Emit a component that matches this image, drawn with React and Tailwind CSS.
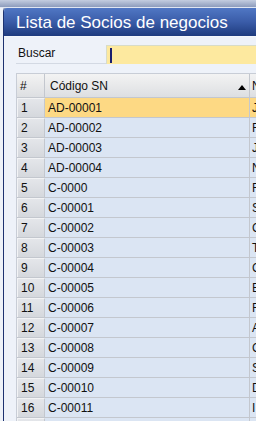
import React from "react";

const rows = [
  ["AD-00001", "J"],
  ["AD-00002", "F"],
  ["AD-00003", "J"],
  ["AD-00004", "N"],
  ["C-0000", "F"],
  ["C-00001", "S"],
  ["C-00002", "C"],
  ["C-00003", "T"],
  ["C-00004", "C"],
  ["C-00005", "E"],
  ["C-00006", "F"],
  ["C-00007", "A"],
  ["C-00008", "C"],
  ["C-00009", "S"],
  ["C-00010", "D"],
  ["C-00011", "I"],
  ["", ""],
];

const font = { fontFamily: '"Liberation Sans", Arial, sans-serif' };

const App = () => {
  return (
    <div
      className="w-[256px] h-[421px] overflow-hidden flex flex-col bg-[#b4c0d4]"
      style={font}
    >
      {/* Desktop strip above the window */}
      <div className="h-[8px] shrink-0 bg-gradient-to-b from-[#c3cde0] to-[#8d9cbc] border-b border-[#dfe6f2]" />

      <div className="flex flex-1 min-h-0">
        {/* Sliver of the window behind */}
        <div className="w-[3px] shrink-0 bg-[#eef2f8]" />

        {/* Window */}
        <div className="flex-1 min-w-0 flex flex-col border-l border-[#1d3270] rounded-tl-[4px] overflow-hidden bg-[#eef2f9]">
          {/* Title bar */}
          <div className="h-[29px] shrink-0 flex items-center pl-[12px] pt-[1px] bg-gradient-to-b from-[#5077c4] via-[#3a5ca8] to-[#1f3b7e] border-b border-[#f4f7fb]">
            <span className="text-white text-[17px] leading-none whitespace-nowrap">
              Lista de Socios de negocios
            </span>
          </div>

          {/* Search row */}
          <div className="flex items-end pl-[12px] pt-[8px] shrink-0">
            <div className="w-[90px] h-[19px] border-b border-[#d3d9e3] text-[12px] leading-[17px] pl-[2px] text-[#111]">
              Buscar
            </div>
            <div className="relative flex-1 h-[19px] bg-[#fde99f] border-l border-t border-[#d8dcc8]">
              <div className="absolute left-[3px] top-[2px] w-[2px] h-[15px] bg-[#1a1f6e]" />
            </div>
          </div>

          {/* Table */}
          <div className="mt-[9px] ml-[12px] flex-1 min-h-0 overflow-hidden border-l border-t border-[#c8cdd6]">
            <div className="w-[300px]">
              {/* Header */}
              <div className="flex h-[24px] bg-gradient-to-b from-[#f3f3f3] to-[#dddfe2] border-b border-[#c3c7ce] text-[12px] text-[#111]">
                <div className="w-[28px] shrink-0 border-r border-[#c3c7ce] flex items-center pl-[3px]">
                  #
                </div>
                <div className="w-[205px] shrink-0 border-r border-[#c3c7ce] flex items-center pl-[5px] relative">
                  Código SN
                  <svg
                    className="absolute right-[3px] top-[11px]"
                    width="8"
                    height="5"
                    viewBox="0 0 8 5"
                  >
                    <polygon points="0,5 8,5 4,0" fill="#000" />
                  </svg>
                </div>
                <div className="flex-1 flex items-center pl-[2px]">N</div>
              </div>

              {/* Rows */}
              {rows.map(([code, name], i) => {
                const sel = i === 0;
                return (
                  <div
                    key={i}
                    className="flex h-[20px] border-b border-[#c3c7ce] text-[12px] text-[#111]"
                  >
                    <div className="w-[28px] shrink-0 border-r border-[#c3c7ce] flex items-center pl-[3px] bg-gradient-to-b from-[#e4e6ea] to-[#d5d8dd] border-l border-t border-l-[#f2f3f5] border-t-[#f2f3f5]">
                      {code ? i + 1 : ""}
                    </div>
                    <div
                      className={`w-[205px] shrink-0 border-r border-[#c3c7ce] flex items-center pl-[3px] ${
                        sel ? "bg-[#fdd984]" : "bg-[#dbe5f3]"
                      }`}
                    >
                      {code}
                    </div>
                    <div
                      className={`flex-1 flex items-center pl-[2px] ${
                        sel ? "bg-[#fdd984]" : "bg-[#dbe5f3]"
                      }`}
                    >
                      {name}
                    </div>
                  </div>
                );
              })}
            </div>
          </div>
        </div>
      </div>
    </div>
  );
};

export default App;
